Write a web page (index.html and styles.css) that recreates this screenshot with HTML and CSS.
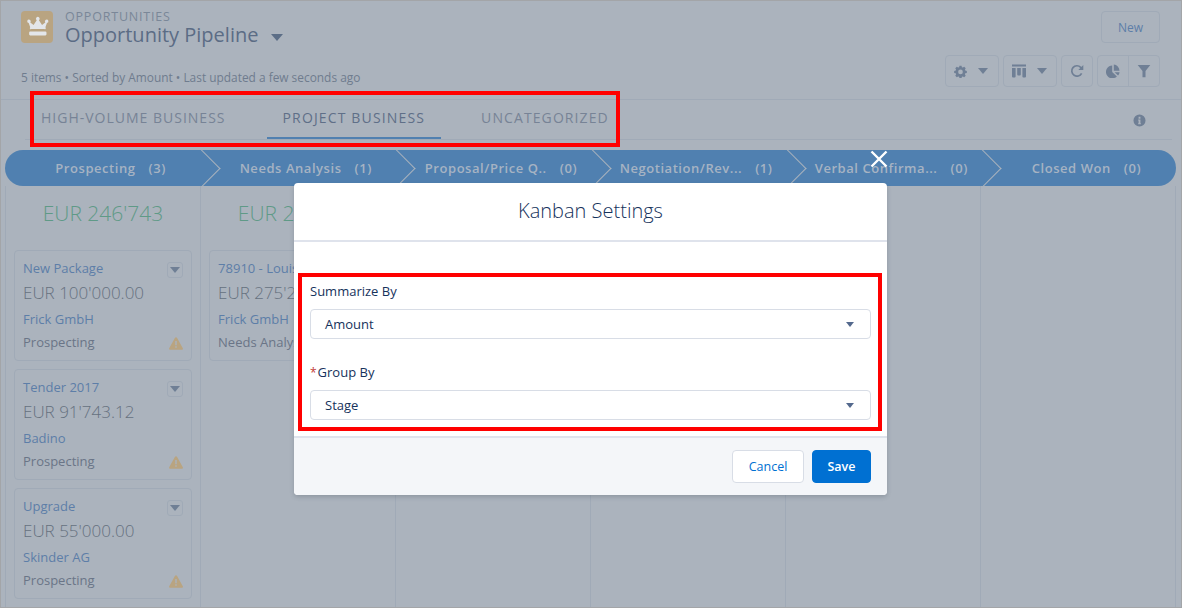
FILE: index.html
```html
<!DOCTYPE html>
<html lang="en">
<head>
<meta charset="utf-8">
<title>Opportunity Pipeline</title>
<link rel="stylesheet" href="styles.css">
</head>
<body>
<div class="page">
  <header class="head">
    <div class="head-left">
      <div class="title-row">
        <div class="obj-icon">
          <svg viewBox="0.5 0.5 29.5 29.5" width="32" height="32"><path fill="#e3e6ea" d="M9 15.5 7.6 11.6a1.6 1.6 0 1 1 1.5-.6l3 2.4 2.9-4.3a1.7 1.7 0 1 1 2 0l2.900 4.300 3-2.400a1.600 1.600 0 1 1 1.500.6L23 15.500a1 1 0 0 1-1 1.700H10a1 1 0 0 1-1-1.700ZM9 19.500h14a1 1 0 0 1 1 1V22a1 1 0 0 1-1 1H9a1 1 0 0 1-1-1v-1.500a1 1 0 0 1 1-1Z"/></svg>
        </div>
        <div class="titles">
          <div class="obj-name">OPPORTUNITIES</div>
          <div class="view-name">Opportunity Pipeline <span class="tri tri-lg"></span></div>
        </div>
      </div>
      <div class="status">5 items • Sorted by Amount • Last updated a few seconds ago</div>
    </div>
    <div class="head-right">
      <button class="btn-new">New</button>
      <div class="tools">
        <div class="tool tool-menu">
          <svg viewBox="0 0 16 16" width="13" height="13"><path class="ic" fill-rule="evenodd" d="M6.700.8h2.600l.4 1.900 1.200.5 1.700-1 1.800 1.800-1 1.700.5 1.200 1.900.4v2.600l-1.900.4-.5 1.200 1 1.700-1.800 1.800-1.700-1-1.200.5-.4 1.900H6.700l-.4-1.900-1.200-.5-1.700 1-1.800-1.800 1-1.700-.5-1.200L.2 9.900V7.300l1.900-.4.500-1.200-1-1.700 1.800-1.800 1.700 1 1.200-.5ZM8 5.600a2.900 2.900 0 1 0 0 5.800 2.900 2.900 0 0 0 0-5.800Z"/></svg>
          <span class="tri"></span>
        </div>
        <div class="tool tool-menu">
          <svg viewBox="0 0 14 14" width="14" height="14"><path class="ic" d="M0 .5h14v2H0ZM0 4h3.600v8.500a1 1 0 0 1-1 1H1a1 1 0 0 1-1-1ZM5.200 4h3.600v6.500a1 1 0 0 1-1 1H6.200a1 1 0 0 1-1-1ZM10.400 4H14v8.500a1 1 0 0 1-1 1h-1.600a1 1 0 0 1-1-1Z"/></svg>
          <span class="tri"></span>
        </div>
        <div class="tool tool-icon">
          <svg viewBox="0 0 14 14" width="14" height="14"><path fill="none" stroke="#6f7f95" stroke-width="1.700" d="M11.600 9.300A5.200 5.200 0 1 1 10.700 3.300L12 4.600"/><path class="ic" d="M13.300 1v5H8.300Z"/></svg>
        </div>
        <div class="tool-pair">
          <div class="tool-half">
            <svg viewBox="0 0 14 14" width="14" height="14"><path class="ic" d="M6.200 1.500V8l4.700 4.400A6.400 6.400 0 1 1 6.200 1.500ZM7.800.6a6.300 6.300 0 0 1 5.700 6.100H7.800ZM8.600 8.300h5a6.300 6.300 0 0 1-1.500 3.300Z"/></svg>
          </div>
          <div class="tool-half tool-last">
            <svg viewBox="0 0 14 14" width="14" height="14"><path class="ic" d="M.7 1h12.600L8.500 7v6.300H5.500V7Z"/></svg>
          </div>
        </div>
      </div>
    </div>
  </header>

  <nav class="tabs">
    <a class="tab tab-one">HIGH-VOLUME BUSINESS</a>
    <a class="tab tab-active">PROJECT BUSINESS</a>
    <a class="tab tab-three">UNCATEGORIZED</a>
    <svg class="info" viewBox="0 0 14 14" width="13" height="13"><path class="ic" fill-rule="evenodd" d="M7 .5a6.500 6.500 0 1 1 0 13 6.500 6.500 0 0 1 0-13ZM6 3v2h2V3ZM5.500 6v1H6v3H5.500v1h3v-1H8V6Z"/></svg>
  </nav>

  <div class="path">
    <div class="seg"><span>Prospecting</span><span class="cnt">(3)</span></div>
    <div class="seg"><span>Needs Analysis</span><span class="cnt">(1)</span></div>
    <div class="seg"><span>Proposal/Price Q..</span><span class="cnt">(0)</span></div>
    <div class="seg"><span>Negotiation/Rev...</span><span class="cnt">(1)</span></div>
    <div class="seg"><span>Verbal Confirma...</span><span class="cnt">(0)</span></div>
    <div class="seg seg-last"><span>Closed Won</span><span class="cnt">(0)</span></div>
  </div>

  <main class="board">
    <section class="col">
      <div class="total">EUR 246'743</div>
      <article class="card">
        <a class="c-name">New Package</a>
        <div class="c-amount">EUR 100'000.00</div>
        <a class="c-acct">Frick GmbH</a>
        <div class="c-stage">Prospecting</div>
        <span class="c-menu"><span class="tri"></span></span>
        <svg class="warn" viewBox="0 0 14 13" width="14" height="13"><path fill="#b9a481" fill-rule="evenodd" d="M6 .8a1.100 1.100 0 0 1 2 0l5.800 10.400a1.100 1.100 0 0 1-1 1.600H1.200a1.100 1.100 0 0 1-1-1.600ZM6.300 4v4.300h1.400V4ZM6.300 9.300v1.500h1.400V9.300Z"/></svg>
      </article>
      <article class="card">
        <a class="c-name">Tender 2017</a>
        <div class="c-amount">EUR 91'743.12</div>
        <a class="c-acct">Badino</a>
        <div class="c-stage">Prospecting</div>
        <span class="c-menu"><span class="tri"></span></span>
        <svg class="warn" viewBox="0 0 14 13" width="14" height="13"><path fill="#b9a481" fill-rule="evenodd" d="M6 .8a1.100 1.100 0 0 1 2 0l5.800 10.400a1.100 1.100 0 0 1-1 1.600H1.200a1.100 1.100 0 0 1-1-1.600ZM6.300 4v4.300h1.400V4ZM6.300 9.300v1.500h1.400V9.300Z"/></svg>
      </article>
      <article class="card">
        <a class="c-name">Upgrade</a>
        <div class="c-amount">EUR 55'000.00</div>
        <a class="c-acct">Skinder AG</a>
        <div class="c-stage">Prospecting</div>
        <span class="c-menu"><span class="tri"></span></span>
        <svg class="warn" viewBox="0 0 14 13" width="14" height="13"><path fill="#b9a481" fill-rule="evenodd" d="M6 .8a1.100 1.100 0 0 1 2 0l5.800 10.400a1.100 1.100 0 0 1-1 1.600H1.200a1.100 1.100 0 0 1-1-1.600ZM6.300 4v4.300h1.400V4ZM6.300 9.300v1.500h1.400V9.300Z"/></svg>
      </article>
    </section>
    <section class="col">
      <div class="total">EUR 275'240</div>
      <article class="card">
        <a class="c-name">78910 - Louis</a>
        <div class="c-amount">EUR 275'240.00</div>
        <a class="c-acct">Frick GmbH</a>
        <div class="c-stage">Needs Analysis</div>
      </article>
    </section>
    <section class="col"></section>
    <section class="col"></section>
    <section class="col"></section>
    <section class="col"></section>
  </main>

  <div class="annot annot-tabs"></div>

  <svg class="close" viewBox="0 0 18 18" width="18" height="18"><path fill="none" stroke="#fff" stroke-width="2.400" d="M1.500 1.500 16.500 16.500M16.500 1.500 1.500 16.500"/></svg>

  <div class="modal" role="dialog">
    <div class="m-head">Kanban Settings</div>
    <div class="m-body">
      <div class="field">
        <label class="lbl">Summarize By</label>
        <div class="select">Amount<span class="tri tri-sel"></span></div>
      </div>
      <div class="field">
        <label class="lbl"><span class="req">*</span>Group By</label>
        <div class="select">Stage<span class="tri tri-sel"></span></div>
      </div>
      <div class="annot annot-form"></div>
    </div>
    <div class="m-foot">
      <button class="btn btn-cancel">Cancel</button>
      <button class="btn btn-save">Save</button>
    </div>
  </div>
</div>
</body>
</html>
```
FILE: styles.css
```css
* { box-sizing: border-box; }
html, body { margin: 0; padding: 0; }
body { font-family: "Open Sans", "Noto Sans", sans-serif; background: #abb3bd; }
.page {
  position: relative;
  width: 1182px;
  height: 608px;
  overflow: hidden;
  background: #abb3bd;
  border: 1px solid #a3a5a8;
  display: flex;
  flex-direction: column;
}
.ic { fill: #6f7f95; }

.tri { display: inline-block; width: 0; height: 0; border-left: 5.500px solid transparent; border-right: 5.500px solid transparent; border-top: 6.500px solid #6f7f95; }
.tri-lg { margin-left: 7px; vertical-align: 1px; border-left-width: 6px; border-right-width: 6px; border-top-width: 7px; border-top-color: #5c6e87; }

.head { height: 99px; flex: none; display: flex; justify-content: space-between; border-bottom: 1px solid #a0aab7; padding: 10px 21px 0 20px; }
.title-row { display: flex; gap: 12px; }
.obj-icon { width: 32px; height: 32px; border-radius: 4px; background: #b9a481; }
.obj-icon svg { display: block; }
.titles { display: flex; flex-direction: column; }
.obj-name { font-size: 12.500px; line-height: 12px; color: #7a8798; letter-spacing: .8px; }
.view-name { font-size: 20px; line-height: 24px; color: #5b6c85; margin-top: 0; }
.status { font-size: 11.900px; line-height: 16px; color: #6f7c8e; margin-top: 22px; }

.head-right { display: flex; flex-direction: column; align-items: flex-end; gap: 12px; }
.btn-new { width: 59px; height: 32px; border: 1px solid #a0aab7; border-radius: 4px; background: transparent; font: 12px "Open Sans", sans-serif; color: #5d7ea8; padding: 0; }
.tools { display: flex; gap: 4px; }
.tool, .tool-pair { height: 32px; border: 1px solid #a0aab7; border-radius: 4px; display: flex; align-items: center; }
.tool-menu { width: 54px; justify-content: center; gap: 11px; padding-right: 2px; }
.tool-icon { width: 32px; justify-content: center; }
.tool-pair { width: 63px; }
.tool-half { flex: 1; height: 100%; display: flex; align-items: center; justify-content: center; }
.tool-last { border-left: 1px solid #a0aab7; }

.tabs { height: 40px; flex: none; margin: 0 9px 0 24px; display: flex; align-items: flex-start; position: relative; border-bottom: 1px solid #a0aab7; }
.tab { font-size: 14px; letter-spacing: 1.100px; color: #778396; display: flex; align-items: center; padding: 0 16px 2px; height: 39px; border-bottom: 2px solid transparent; }
.tab-one { margin-right: 25px; letter-spacing: 1px; }
.tab-active { color: #5f6f88; border-bottom-color: #5080b0; margin-right: 24px; letter-spacing: 1.150px; }
.info { position: absolute; right: 26px; top: 14px; }

.path { height: 36px; flex: none; margin: 10px 5px 0 4px; border-radius: 18px; background: #5080b0; display: flex; overflow: hidden; }
.seg { flex: 1; min-width: 0; position: relative; display: flex; align-items: center; justify-content: center; gap: 13px; color: #a6b3c3; font-size: 13px; font-weight: 600; letter-spacing: .55px; padding-left: 16px; white-space: nowrap; }
.seg::after { content: ""; position: absolute; right: -15px; top: 5px; width: 26px; height: 26px; border-top: 1.500px solid #abb3bd; border-right: 1.500px solid #abb3bd; transform: rotate(45deg); z-index: 1; }
.seg-last::after { display: none; }

.board { flex: 1; display: flex; margin: 0 4.500px 0 4px; min-height: 0; }
.col { flex: 1; min-width: 0; border-left: 1px solid #a0aab7; padding: 0 8px; display: flex; flex-direction: column; gap: 8px; }
.col:last-child { border-right: 1px solid #a0aab7; }
.total { height: 56px; flex: none; padding-top: 12px; text-align: center; font-size: 21px; font-weight: 300; line-height: 30px; color: #5f9a87; white-space: nowrap; overflow: hidden; }
.card { position: relative; flex: none; height: 111px; border: 1px solid #a0aab7; border-radius: 4px; padding: 8px 8px 0 8px; display: flex; flex-direction: column; align-items: flex-start; white-space: nowrap; overflow: hidden; }
.c-name { font-size: 13px; line-height: 18px; color: #5d7ea8; }
.c-amount { font-size: 17px; font-weight: 300; line-height: 22px; margin-top: 5px; color: #66717f; }
.c-acct { font-size: 13px; line-height: 18px; margin-top: 6px; color: #5d7ea8; }
.c-stage { font-size: 13px; line-height: 18px; margin-top: 5px; color: #6a7587; }
.c-menu { position: absolute; right: 8px; top: 11px; width: 16px; height: 16px; border: 1px solid #a0aab7; border-radius: 3px; display: flex; align-items: center; justify-content: center; }
.c-menu .tri { border-left-width: 5px; border-right-width: 5px; border-top-width: 6px; }
.warn { position: absolute; right: 8px; bottom: 10px; }

.annot { position: absolute; border: 4px solid #f00; pointer-events: none; }
.annot-tabs { left: 29px; top: 90px; width: 590px; height: 56px; }
.annot-form { left: 4px; top: 31px; width: 584px; height: 158px; }

.close { position: absolute; left: 869px; top: 149px; z-index: 3; }

.modal { position: absolute; left: 293px; top: 182px; width: 593px; height: 312px; background: #fff; border-radius: 4px; box-shadow: 0 2px 4px rgba(60, 70, 85, .25); display: flex; flex-direction: column; z-index: 2; }
.m-head { height: 59px; flex: none; border-bottom: 2px solid #dfe3ec; text-align: center; font-size: 20px; font-weight: 300; line-height: 55px; color: #16325c; }
.m-body { position: relative; flex: 1; padding: 40px 16px 0; display: flex; flex-direction: column; gap: 24px; }
.field { display: flex; flex-direction: column; gap: 9px; }
.lbl { font-size: 13px; line-height: 18px; height: 18px; color: #16325c; }
.req { color: #c23934; font-size: 12px; line-height: 1; margin-right: 1px; }
.select { position: relative; height: 30px; border: 1px solid #d8dde6; border-radius: 4px; padding-left: 14px; font-size: 13px; line-height: 28px; color: #16325c; }
.tri-sel { position: absolute; right: 16px; top: 12px; border-left-width: 4.500px; border-right-width: 4.500px; border-top-width: 5.500px; border-top-color: #54698d; }
.m-foot { height: 59px; flex: none; border-top: 2px solid #dfe3ec; border-radius: 0 0 4px 4px; background: #f4f6f9; padding: 0 16px; display: flex; align-items: center; justify-content: flex-end; gap: 8px; }
.btn { height: 33px; border-radius: 4px; font: 12.500px "Open Sans", sans-serif; padding: 0; }
.btn-cancel { width: 72px; background: #fff; border: 1px solid #d8dde6; color: #0070d2; }
.btn-save { width: 59px; background: #0070d2; border: 1px solid #0070d2; color: #fff; font-weight: 600; }
```
